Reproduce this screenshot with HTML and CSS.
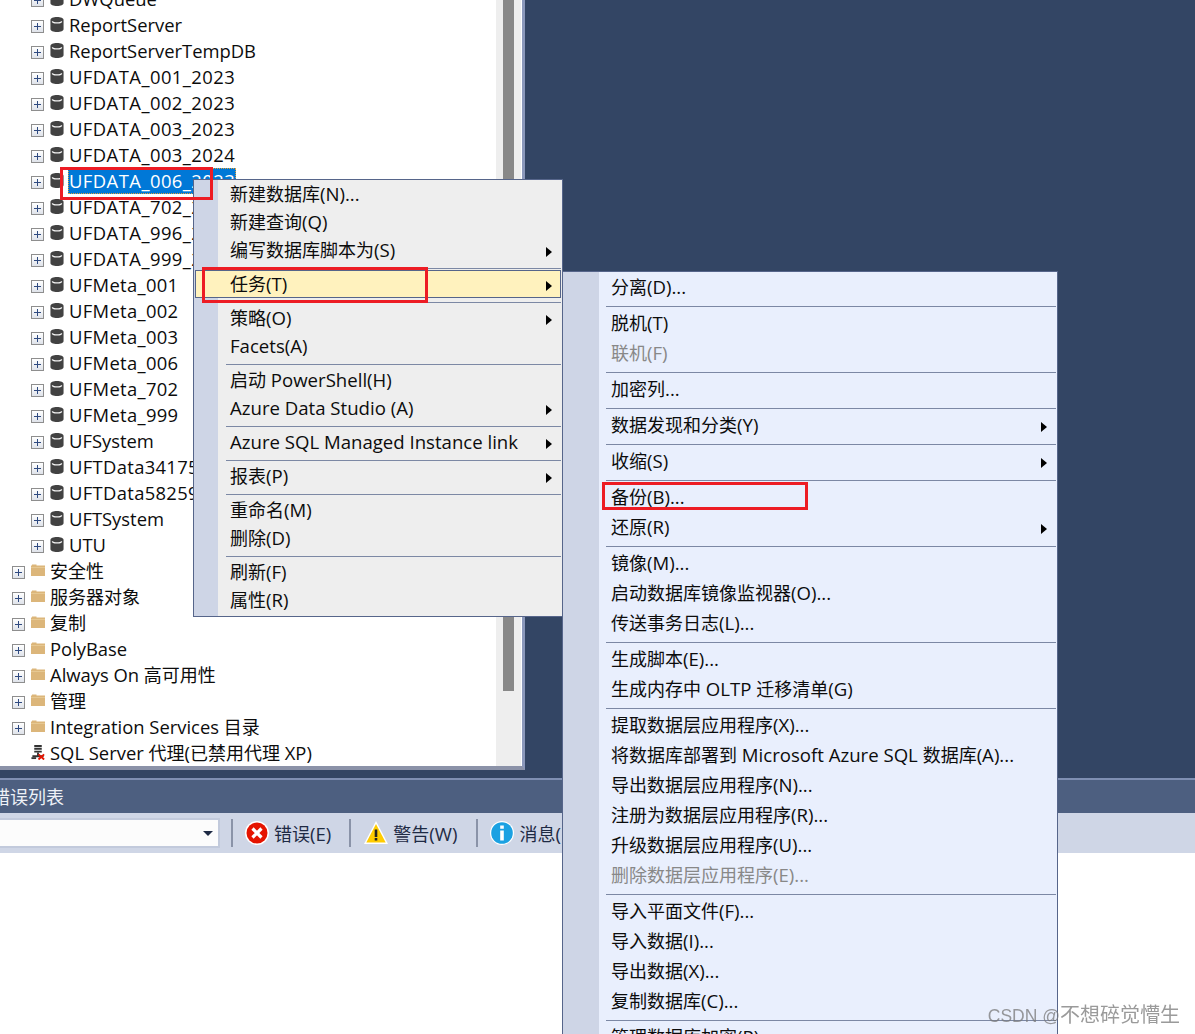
FILE: index.html
```html
<!DOCTYPE html>
<html lang="zh-CN">
<head>
<meta charset="utf-8">
<title>SSMS</title>
<link rel="stylesheet" href="styles.css">
</head>
<body>
<svg class="sprite" width="0" height="0">
  <symbol id="db" viewBox="0 0 14 16"><path d="M0 3.200C0 1.200 3 0 7 0s7 1.200 7 3.200v9.600c0 2-3 3.200-7 3.200s-7-1.200-7-3.200z" fill="#424242"/><path d="M1.600 4.200C3 5.200 5 5.600 7 5.600s4-.4 5.400-1.400c.2 1-.1 1.400-.8 1.800C10.400 6.700 8.700 7 7 7s-3.400-.3-4.600-1c-.7-.4-1-.8-.8-1.800z" fill="#f4f4f4"/></symbol>
  <symbol id="folder" viewBox="0 0 14 12"><path d="M0 1.500h1V.5h4.500v1H14V12H0z" fill="#dcb67a"/><path d="M0 3h14v1H0z" fill="#e6c892"/></symbol>
  <symbol id="agent" viewBox="0 0 14 16"><path d="M3 0h8v2H3zM3 3h8v2H3zM3 6h8v2H3z" fill="#333"/><path d="M6 8h2v3h5v2H1v-2h5z" fill="#333"/><path d="M0 13h5v2H0z" fill="#333"/><path d="M7.500 10l6 5.500M13.500 10l-6 5.500" stroke="#e51400" stroke-width="2"/></symbol>
  <symbol id="err" viewBox="0 0 24 24"><circle cx="12" cy="12" r="12" fill="#fff"/><circle cx="12" cy="12" r="10.500" fill="#e51400"/><path d="M7.500 7.500l9 9M16.500 7.500l-9 9" stroke="#fff" stroke-width="3.200"/></symbol>
  <symbol id="warn" viewBox="0 0 24 24"><path d="M12 0L24 23H0z" fill="#fff"/><path d="M12 3l9.700 18.500H2.300z" fill="#ffcc00"/><path d="M10.700 8.500h2.600v7.500h-2.600zM10.700 17h2.600v2.600h-2.600z" fill="#222"/></symbol>
  <symbol id="info" viewBox="0 0 24 24"><circle cx="12" cy="12" r="12" fill="#fff"/><circle cx="12" cy="12" r="10.800" fill="#1ba1e2"/><path d="M10.200 4.500h3.600v3.200h-3.600zM10.200 9.500h3.600v10h-3.600z" fill="#fff"/></symbol>
</svg>

<div class="stage">
  <div class="workspace">
    <div class="tree-pane">
      <div class="tree">
        <div class="row d1"><span class="exp"></span><svg class="ico"><use href="#db"/></svg><span class="label">DWQueue</span></div>
        <div class="row d1"><span class="exp"></span><svg class="ico"><use href="#db"/></svg><span class="label">ReportServer</span></div>
        <div class="row d1"><span class="exp"></span><svg class="ico"><use href="#db"/></svg><span class="label">ReportServerTempDB</span></div>
        <div class="row d1"><span class="exp"></span><svg class="ico"><use href="#db"/></svg><span class="label data">UFDATA_001_2023</span></div>
        <div class="row d1"><span class="exp"></span><svg class="ico"><use href="#db"/></svg><span class="label data">UFDATA_002_2023</span></div>
        <div class="row d1"><span class="exp"></span><svg class="ico"><use href="#db"/></svg><span class="label data">UFDATA_003_2023</span></div>
        <div class="row d1"><span class="exp"></span><svg class="ico"><use href="#db"/></svg><span class="label data">UFDATA_003_2024</span></div>
        <div class="row d1"><span class="exp"></span><svg class="ico"><use href="#db"/></svg><span class="label data selected">UFDATA_006_2023</span></div>
        <div class="row d1"><span class="exp"></span><svg class="ico"><use href="#db"/></svg><span class="label data">UFDATA_702_2023</span></div>
        <div class="row d1"><span class="exp"></span><svg class="ico"><use href="#db"/></svg><span class="label data">UFDATA_996_2023</span></div>
        <div class="row d1"><span class="exp"></span><svg class="ico"><use href="#db"/></svg><span class="label data">UFDATA_999_2023</span></div>
        <div class="row d1"><span class="exp"></span><svg class="ico"><use href="#db"/></svg><span class="label num">UFMeta_001</span></div>
        <div class="row d1"><span class="exp"></span><svg class="ico"><use href="#db"/></svg><span class="label num">UFMeta_002</span></div>
        <div class="row d1"><span class="exp"></span><svg class="ico"><use href="#db"/></svg><span class="label num">UFMeta_003</span></div>
        <div class="row d1"><span class="exp"></span><svg class="ico"><use href="#db"/></svg><span class="label num">UFMeta_006</span></div>
        <div class="row d1"><span class="exp"></span><svg class="ico"><use href="#db"/></svg><span class="label num">UFMeta_702</span></div>
        <div class="row d1"><span class="exp"></span><svg class="ico"><use href="#db"/></svg><span class="label num">UFMeta_999</span></div>
        <div class="row d1"><span class="exp"></span><svg class="ico"><use href="#db"/></svg><span class="label">UFSystem</span></div>
        <div class="row d1"><span class="exp"></span><svg class="ico"><use href="#db"/></svg><span class="label num">UFTData341758</span></div>
        <div class="row d1"><span class="exp"></span><svg class="ico"><use href="#db"/></svg><span class="label num">UFTData582596</span></div>
        <div class="row d1"><span class="exp"></span><svg class="ico"><use href="#db"/></svg><span class="label">UFTSystem</span></div>
        <div class="row d1"><span class="exp"></span><svg class="ico"><use href="#db"/></svg><span class="label">UTU</span></div>
        <div class="row d0"><span class="exp"></span><svg class="fold"><use href="#folder"/></svg><span class="label"><span class="cjk">安全性</span></span></div>
        <div class="row d0"><span class="exp"></span><svg class="fold"><use href="#folder"/></svg><span class="label"><span class="cjk">服务器对象</span></span></div>
        <div class="row d0"><span class="exp"></span><svg class="fold"><use href="#folder"/></svg><span class="label"><span class="cjk">复制</span></span></div>
        <div class="row d0"><span class="exp"></span><svg class="fold"><use href="#folder"/></svg><span class="label">PolyBase</span></div>
        <div class="row d0"><span class="exp"></span><svg class="fold"><use href="#folder"/></svg><span class="label">Always On <span class="cjk">高可用性</span></span></div>
        <div class="row d0"><span class="exp"></span><svg class="fold"><use href="#folder"/></svg><span class="label"><span class="cjk">管理</span></span></div>
        <div class="row d0"><span class="exp"></span><svg class="fold"><use href="#folder"/></svg><span class="label">Integration Services <span class="cjk">目录</span></span></div>
        <div class="row d0"><span class="exp blank"></span><svg class="ico"><use href="#agent"/></svg><span class="label">SQL Server <span class="cjk">代理</span>(<span class="cjk">已禁用代理</span> XP)</span></div>
      </div>
      <div class="scrollbar"><div class="thumb"></div></div>
    </div>
  </div>
  <div class="splitter"></div>
  <div class="panel-title"><span class="cjk">错误列表</span></div>
  <div class="toolbar">
    <div class="combo"><span class="caret"></span></div>
    <span class="tsep"></span>
    <svg class="tico"><use href="#err"/></svg><span class="tlabel"><span class="cjk">错误</span>(E)</span>
    <span class="tsep"></span>
    <svg class="tico warn-ico"><use href="#warn"/></svg><span class="tlabel warn-label"><span class="cjk">警告</span>(W)</span>
    <span class="tsep"></span>
    <svg class="tico"><use href="#info"/></svg><span class="tlabel"><span class="cjk">消息</span>(</span>
  </div>
  <div class="content"></div>

  <div class="menu main-menu">
    <div class="item"><span><span class="cjk">新建数据库</span>(N)...</span></div>
    <div class="item"><span><span class="cjk">新建查询</span>(Q)</span></div>
    <div class="item"><span><span class="cjk">编写数据库脚本为</span>(S)</span><i class="arrow"></i></div>
    <div class="sep"></div>
    <div class="item hot"><span><span class="cjk">任务</span>(T)</span><i class="arrow"></i></div>
    <div class="sep"></div>
    <div class="item"><span><span class="cjk">策略</span>(O)</span><i class="arrow"></i></div>
    <div class="item"><span>Facets(A)</span></div>
    <div class="sep"></div>
    <div class="item"><span><span class="cjk">启动</span> PowerShell(H)</span></div>
    <div class="item"><span>Azure Data Studio (A)</span><i class="arrow"></i></div>
    <div class="sep"></div>
    <div class="item"><span>Azure SQL Managed Instance link</span><i class="arrow"></i></div>
    <div class="sep"></div>
    <div class="item"><span><span class="cjk">报表</span>(P)</span><i class="arrow"></i></div>
    <div class="sep"></div>
    <div class="item"><span><span class="cjk">重命名</span>(M)</span></div>
    <div class="item"><span><span class="cjk">删除</span>(D)</span></div>
    <div class="sep"></div>
    <div class="item"><span><span class="cjk">刷新</span>(F)</span></div>
    <div class="item"><span><span class="cjk">属性</span>(R)</span></div>
  </div>

  <div class="menu sub-menu">
    <div class="item"><span><span class="cjk">分离</span>(D)...</span></div>
    <div class="sep"></div>
    <div class="item"><span><span class="cjk">脱机</span>(T)</span></div>
    <div class="item off"><span><span class="cjk">联机</span>(F)</span></div>
    <div class="sep"></div>
    <div class="item"><span><span class="cjk">加密列</span>...</span></div>
    <div class="sep"></div>
    <div class="item"><span><span class="cjk">数据发现和分类</span>(Y)</span><i class="arrow"></i></div>
    <div class="sep"></div>
    <div class="item"><span><span class="cjk">收缩</span>(S)</span><i class="arrow"></i></div>
    <div class="sep"></div>
    <div class="item"><span><span class="cjk">备份</span>(B)...</span></div>
    <div class="item"><span><span class="cjk">还原</span>(R)</span><i class="arrow"></i></div>
    <div class="sep"></div>
    <div class="item"><span><span class="cjk">镜像</span>(M)...</span></div>
    <div class="item"><span><span class="cjk">启动数据库镜像监视器</span>(O)...</span></div>
    <div class="item"><span><span class="cjk">传送事务日志</span>(L)...</span></div>
    <div class="sep"></div>
    <div class="item"><span><span class="cjk">生成脚本</span>(E)...</span></div>
    <div class="item"><span><span class="cjk">生成内存中</span> OLTP <span class="cjk">迁移清单</span>(G)</span></div>
    <div class="sep"></div>
    <div class="item"><span><span class="cjk">提取数据层应用程序</span>(X)...</span></div>
    <div class="item"><span><span class="cjk">将数据库部署到</span> Microsoft Azure SQL <span class="cjk">数据库</span>(A)...</span></div>
    <div class="item"><span><span class="cjk">导出数据层应用程序</span>(N)...</span></div>
    <div class="item"><span><span class="cjk">注册为数据层应用程序</span>(R)...</span></div>
    <div class="item"><span><span class="cjk">升级数据层应用程序</span>(U)...</span></div>
    <div class="item off"><span><span class="cjk">删除数据层应用程序</span>(E)...</span></div>
    <div class="sep"></div>
    <div class="item"><span><span class="cjk">导入平面文件</span>(F)...</span></div>
    <div class="item"><span><span class="cjk">导入数据</span>(I)...</span></div>
    <div class="item"><span><span class="cjk">导出数据</span>(X)...</span></div>
    <div class="item"><span><span class="cjk">复制数据库</span>(C)...</span></div>
    <div class="sep"></div>
    <div class="item"><span><span class="cjk">管理数据库加密</span>(P)...</span></div>
  </div>

  <div class="mark mark-node"></div>
  <div class="mark mark-task"></div>
  <div class="mark mark-backup"></div>
  <div class="watermark"><span class="wm-latin">CSDN @</span>不想碎觉懵生</div>
</div>
</body>
</html>
```
FILE: styles.css
```css
* { box-sizing: border-box; }
html, body { margin: 0; padding: 0; background: #fff; }
body {
  font-family: "Open Sans", "Noto Sans CJK SC", sans-serif;
  font-size: 18.6px;
  color: #0c0c0c;
}
.sprite { position: absolute; }
.cjk { font-family: "Noto Sans CJK SC", sans-serif; font-size: 18px; line-height: 0; }

.stage {
  position: relative;
  width: 1195px;
  height: 1034px;
  overflow: hidden;
  display: flex;
  flex-direction: column;
}
.workspace { height: 778px; flex: none; background: #334564; }
.tree-pane {
  width: 525px;
  height: 770px;
  display: flex;
  background: #fff;
  border-right: 3px solid #8b98bb;
  border-bottom: 4px solid #8b92a8;
  overflow: hidden;
}
.tree { width: 496px; flex: none; margin-top: -14px; font-size: 18.4px; }
.row { display: flex; align-items: center; height: 26px; white-space: nowrap; line-height: 26px; }
.d1 { padding-left: 31px; }
.d0 { padding-left: 12px; }
.exp {
  width: 13px;
  height: 13px;
  flex: none;
  border: 1px solid #8e8e8e;
  background:
    linear-gradient(#2f4a80, #2f4a80) center / 7px 1px no-repeat,
    linear-gradient(#2f4a80, #2f4a80) center / 1px 7px no-repeat,
    linear-gradient(#fff, #dfe3ea);
  margin-top: 2px;
}
.exp.blank { visibility: hidden; }
.ico { width: 14px; height: 15px; flex: none; margin-left: 6px; margin-top: -2px; }
.fold { width: 14px; height: 12px; flex: none; margin-left: 6px; margin-top: -2px; }
.label { margin-left: 4px; padding: 0 1px; height: 26px; }
.num { letter-spacing: .33px; }
.data { letter-spacing: .46px; }
.selected {
  background: #0078d7;
  color: #fff;
  outline: 1px dotted #e2a23a;
  outline-offset: -1px;
}
.scrollbar { flex: none; width: 26px; background: #eee; border-right: 1px solid #fff; padding-left: 7px; }
.thumb { width: 11px; height: 691px; background: #888; }

.splitter { height: 2px; flex: none; background: #7f8fb3; }
.panel-title {
  height: 33px;
  flex: none;
  background: #4d5f80;
  color: #eef1f7;
  line-height: 33px;
  overflow: hidden;
  white-space: nowrap;
  text-indent: -8px;
}
.toolbar {
  height: 40px;
  flex: none;
  background: #cfd6e6;
  display: flex;
  align-items: center;
  color: #1e2a44;
  white-space: nowrap;
}
.combo {
  width: 220px;
  height: 30px;
  flex: none;
  background: #fcfcfc;
  border: 2px solid #c2cadc;
  border-left: 0;
  display: flex;
  justify-content: flex-end;
  align-items: center;
  padding-right: 5px;
}
.caret { width: 0; height: 0; border: 5px solid transparent; border-top: 5px solid #1e2a44; border-bottom: 0; }
.tsep { width: 2px; height: 28px; flex: none; background: #8a93a8; margin-left: 11px; margin-right: 12px; }
.tlabel { margin-left: 5px; margin-right: 7px; }
.warn-ico { margin-left: 1px; }
.warn-label { margin-right: 8px; }
.tico { width: 24px; height: 24px; flex: none; }
.content { flex: 1; background: #fff; }

.menu { position: absolute; border: 1px solid #56658a; }
.main-menu {
  left: 193px;
  top: 179px;
  width: 370px;
  height: 438px;
  background: linear-gradient(to right, #ced5e6 24px, #eeeeee 24px);
}
.sub-menu {
  left: 562px;
  top: 271px;
  width: 496px;
  height: 780px;
  background: linear-gradient(to right, #ced5e6 36px, #e9effd 36px);
}
.item {
  display: flex;
  justify-content: space-between;
  align-items: center;
  white-space: nowrap;
  padding-bottom: 2px;
}
.main-menu .item { height: 28px; padding-left: 36px; padding-right: 10px; }
.sub-menu .item { height: 30px; padding-left: 48px; padding-right: 10px; }
.main-menu .item.hot {
  margin: 0 1px;
  padding-left: 34px;
  padding-right: 8px;
  background: #fff2be;
  border: 1px solid #56658a;
}
.off { color: #888; }
.sep { height: 6px; display: flex; align-items: center; padding-top: 2px; }
.sep::after { content: ""; flex: 1; height: 1px; background: #7c88a4; }
.main-menu .sep { padding-left: 32px; padding-right: 1px; }
.sub-menu .sep { padding-left: 43px; padding-right: 1px; }
.arrow {
  width: 0;
  height: 0;
  margin-top: 5px;
  border-style: solid;
  border-width: 5px 0 5px 6px;
  border-color: transparent transparent transparent #000;
}

.mark { position: absolute; border: 3px solid #ed1c24; }
.mark-node { left: 60px; top: 167px; width: 153px; height: 33px; }
.mark-task { left: 202px; top: 267px; width: 226px; height: 36px; }
.mark-backup { left: 602px; top: 482px; width: 206px; height: 28px; }

.watermark {
  position: absolute;
  right: 15px;
  top: 1000px;
  font-family: "Noto Sans CJK SC", sans-serif;
  font-size: 20px;
  line-height: 28px;
  color: rgba(120, 120, 120, .75);
  white-space: nowrap;
  filter: blur(.4px);
}
.wm-latin { font-family: "Liberation Sans", sans-serif; font-size: 17.5px; }
```
